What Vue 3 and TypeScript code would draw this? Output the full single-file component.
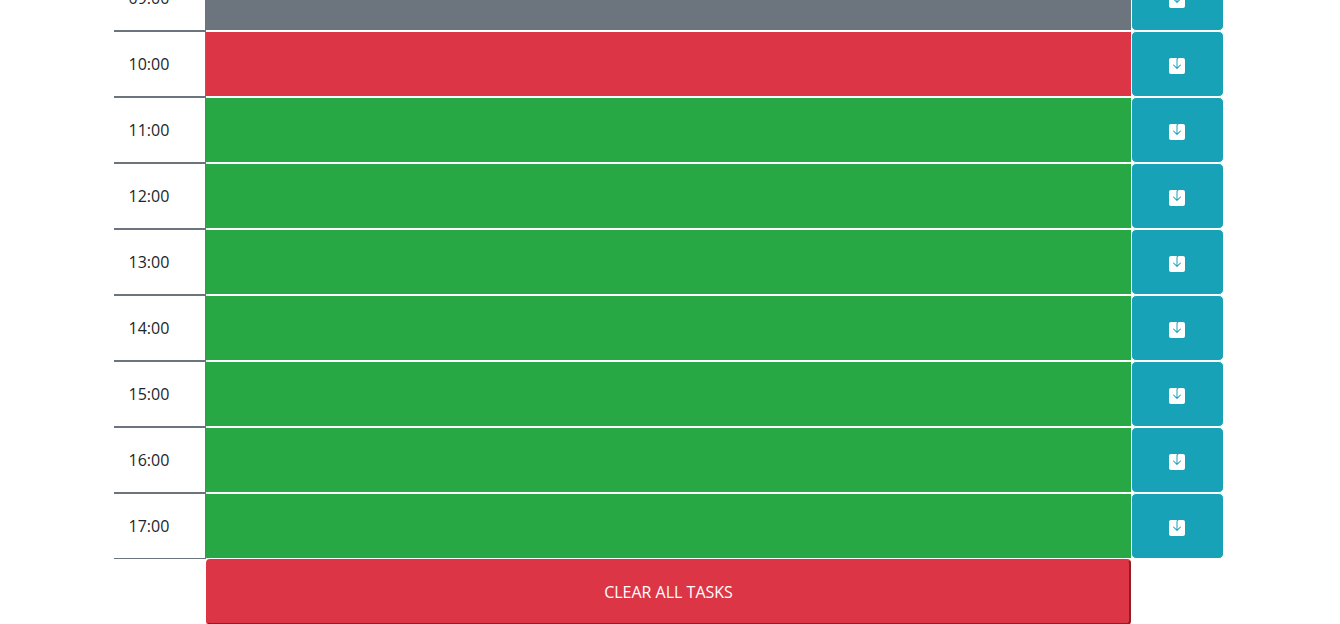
<script setup lang="ts">
import { ref } from 'vue'

type Phase = 'past' | 'present' | 'future'

interface Slot {
  time: string
  phase: Phase
  task: string
}

const currentHour = 10

const phaseOf = (hour: number): Phase =>
  hour < currentHour ? 'past' : hour === currentHour ? 'present' : 'future'

const slots = ref<Slot[]>(
  Array.from({ length: 9 }, (_, i) => {
    const hour = i + 9
    return { time: `${String(hour).padStart(2, '0')}:00`, phase: phaseOf(hour), task: '' }
  }),
)

const saved = ref<Record<string, string>>({})

function save(slot: Slot) {
  saved.value[slot.time] = slot.task
}

function clearAll() {
  saved.value = {}
  slots.value.forEach((slot) => (slot.task = ''))
}
</script>

<template>
  <main class="page">
    <div class="planner">
      <form v-for="slot in slots" :key="slot.time" class="row" @submit.prevent="save(slot)">
        <label class="hour" :for="`task-${slot.time}`">{{ slot.time }}</label>
        <textarea :id="`task-${slot.time}`" v-model="slot.task" class="task" :class="slot.phase"></textarea>
        <button class="save" type="submit" :aria-label="`Save ${slot.time}`">
          <svg class="icon" viewBox="0 0 16 16" fill="currentColor" aria-hidden="true">
            <path
              fill-rule="evenodd"
              d="M8.5 1.5A1.5 1.5 0 0 1 10 0h4a2 2 0 0 1 2 2v12a2 2 0 0 1-2 2H2a2 2 0 0 1-2-2V2a2 2 0 0 1 2-2h6c-.314.418-.5.937-.5 1.5v7.793L4.854 6.646a.5.5 0 1 0-.708.708l3.5 3.5a.5.5 0 0 0 .708 0l3.5-3.5a.5.5 0 0 0-.708-.708L8.5 9.293V1.5z"
            />
          </svg>
        </button>
      </form>
      <div class="row">
        <button class="clear" type="button" @click="clearAll">CLEAR ALL TASKS</button>
      </div>
    </div>
  </main>
</template>

<style>
body {
  margin: 0;
  background: #fff;
}
</style>

<style scoped>
.page {
  box-sizing: border-box;
  height: 100vh;
  overflow: hidden;
  padding-right: 3px;
  background: #fff;
  font-family: 'Open Sans', sans-serif;
  font-size: 16px;
  line-height: 24px;
  color: #212529;
}

.planner {
  max-width: 1110px;
  margin: -35px auto 0;
}

.row {
  display: grid;
  grid-template-columns: minmax(0, 1fr) minmax(0, 10fr) minmax(0, 1fr);
  grid-auto-rows: 66px;
}

.hour,
.task,
.save,
.clear {
  box-sizing: border-box;
  margin: 0;
  font: inherit;
}

.hour {
  display: flex;
  align-items: center;
  padding: 0 15px;
  border: solid #6c757d;
  border-width: 1px 1px 1px 0;
}

.task {
  display: block;
  width: 100%;
  height: 100%;
  padding: 8px 15px;
  border: solid #fff;
  border-width: 1px 0;
  border-radius: 0;
  outline: 0;
  resize: none;
  color: #fff;
}

.past {
  background: #6c757d;
}

.present {
  background: #dc3545;
}

.future {
  background: #28a745;
}

.save {
  display: flex;
  align-items: center;
  justify-content: center;
  padding: 4px 0 0;
  border: 1px solid #fff;
  border-radius: 5px;
  background: #17a2b8;
  color: #fff;
  cursor: pointer;
}

.icon {
  width: 16px;
  height: 16px;
}

.clear {
  grid-column: 2;
  padding: 0;
  border: solid #dc3545;
  border-width: 2px;
  border-right-color: #931c28;
  border-bottom-color: #931c28;
  border-radius: 4px;
  background: #dc3545;
  color: #fff;
  cursor: pointer;
}
</style>
